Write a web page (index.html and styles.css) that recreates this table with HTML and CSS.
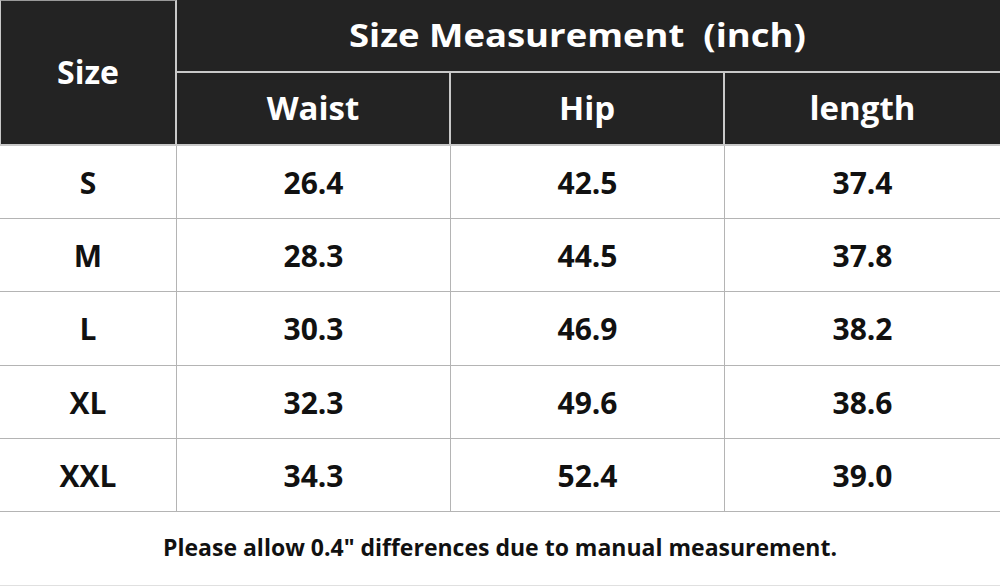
FILE: index.html
```html
<!DOCTYPE html>
<html>
<head>
<meta charset="utf-8">
<link rel="stylesheet" href="styles.css">
</head>
<body>
<div class="chart">
  <div class="cell head size-head">Size</div>
  <div class="cell head title"><span class="wide">Size Measurement&nbsp; (inch)</span></div>
  <div class="cell head">Waist</div>
  <div class="cell head">Hip</div>
  <div class="cell head last">length</div>

  <div class="cell">S</div><div class="cell">26.4</div><div class="cell">42.5</div><div class="cell last">37.4</div>
  <div class="cell">M</div><div class="cell">28.3</div><div class="cell">44.5</div><div class="cell last">37.8</div>
  <div class="cell">L</div><div class="cell">30.3</div><div class="cell">46.9</div><div class="cell last">38.2</div>
  <div class="cell">XL</div><div class="cell">32.3</div><div class="cell">49.6</div><div class="cell last">38.6</div>
  <div class="cell">XXL</div><div class="cell">34.3</div><div class="cell">52.4</div><div class="cell last">39.0</div>

  <div class="cell note">Please allow 0.4" differences due to manual measurement.</div>
</div>
</body>
</html>
```

FILE: styles.css
```css
html, body {
  margin: 0;
  padding: 0;
  background: #ffffff;
}
.chart {
  width: 1000px;
  height: 586px;
  display: grid;
  grid-template-columns: 177px 274px 274px 275px;
  grid-template-rows: 73px 73px 73px 73px 74px 73px 73px 74px;
  font-family: "Open Sans", "Noto Sans", sans-serif;
  font-weight: 700;
  color: #111111;
  box-sizing: border-box;
}
.cell {
  display: flex;
  align-items: center;
  justify-content: center;
  font-size: 30px;
  border-right: 1px solid #b4b4b4;
  border-bottom: 1px solid #b4b4b4;
  box-sizing: border-box;
}
.cell.last {
  border-right: none;
}
.head {
  background: #232323;
  color: #ffffff;
  font-size: 33px;
  border-color: #c8c8c8;
  border-width: 0 2px 2px 0;
  padding-bottom: 2px;
}
.head.last {
  border-right: none;
}
.size-head {
  grid-row: 1 / span 2;
  font-size: 32px;
  border-left: 1px solid #c8c8c8;
  border-top: 1px solid #9a9a9a;
}
.title {
  grid-column: 2 / span 3;
  border-right: none;
  font-size: 32px;
  padding-right: 22px;
}
.wide {
  display: inline-block;
  transform: scaleX(1.14);
}
.note {
  grid-column: 1 / span 4;
  font-size: 23px;
  border-right: none;
  border-bottom: 1px solid #e0e0e0;
  padding-bottom: 3px;
}
```
